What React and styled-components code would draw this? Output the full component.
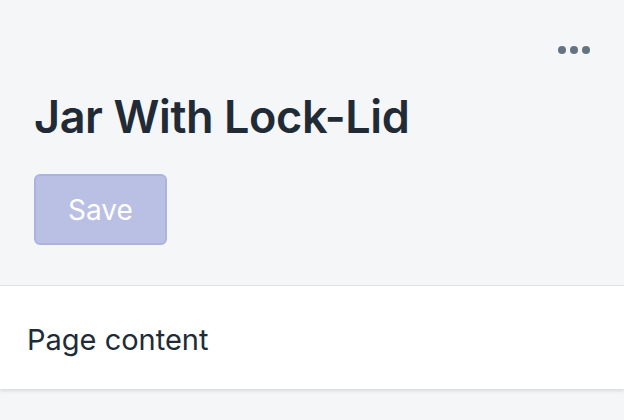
import React from "react";
import styled, { createGlobalStyle } from "styled-components";

const GlobalStyle = createGlobalStyle`
  * {
    box-sizing: border-box;
    margin: 0;
    padding: 0;
  }
  body {
    background: #f4f6f8;
    font-family: Inter, "Noto Sans", sans-serif;
    color: #212b36;
  }
`;

const Page = styled.div`
  width: 624px;
  height: 420px;
  background: #f4f6f8;
  display: flex;
  flex-direction: column;
`;

const Header = styled.div`
  display: flex;
  flex-direction: column;
  padding: 30px 34px 0 34px;
`;

const Actions = styled.div`
  display: flex;
  justify-content: flex-end;
  height: 40px;
`;

const MoreButton = styled.button`
  border: none;
  background: none;
  display: flex;
  align-items: center;
  gap: 4px;
  height: 40px;
`;

const Dot = styled.span`
  width: 8px;
  height: 8px;
  border-radius: 50%;
  background: #637381;
`;

const Title = styled.h1`
  font-size: 45px;
  font-weight: 600;
  line-height: 52px;
  letter-spacing: -0.4px;
  color: #212b36;
  margin-top: 21px;
`;

const SaveButton = styled.button`
  margin-top: 31px;
  width: 133px;
  height: 71px;
  border-radius: 6px;
  border: 2px solid #abb4de;
  background: #b9c0e4;
  color: #ffffff;
  font-family: Inter, "Noto Sans", sans-serif;
  font-size: 28px;
  font-weight: 400;
`;

const Card = styled.div`
  margin-top: 40px;
  background: #ffffff;
  border-top: 1px solid #dfe3e8;
  box-shadow: 0 2px 3px rgba(63, 63, 68, 0.15);
  padding: 36px 27px 31px;
  font-size: 29px;
  line-height: 36px;
  color: #212b36;
`;

export default function App() {
  return (
    <Page>
      <GlobalStyle />
      <Header>
        <Actions>
          <MoreButton aria-label="More actions">
            <Dot />
            <Dot />
            <Dot />
          </MoreButton>
        </Actions>
        <Title>Jar With Lock-Lid</Title>
        <div>
          <SaveButton disabled>Save</SaveButton>
        </div>
      </Header>
      <Card>Page content</Card>
    </Page>
  );
}
